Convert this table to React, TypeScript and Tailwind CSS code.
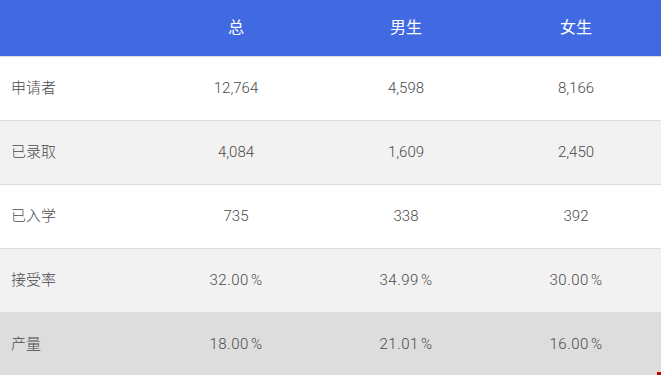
import React from "react";

const rows = [
  { label: "申请者", v: ["12,764", "4,598", "8,166"], bg: "bg-white" },
  { label: "已录取", v: ["4,084", "1,609", "2,450"], bg: "bg-[#f2f2f2]" },
  { label: "已入学", v: ["735", "338", "392"], bg: "bg-white" },
  { label: "接受率", v: ["32.00%", "34.99%", "30.00%"], bg: "bg-[#f2f2f2]" },
  { label: "产量", v: ["18.00%", "21.01%", "16.00%"], bg: "bg-[#dddddd]" },
];

function Val({ x }: { x: string }) {
  if (x.endsWith("%")) {
    return (
      <span className="tracking-[0.5px]">
        {x.slice(0, -1)}
        <span className="ml-[2px]">%</span>
      </span>
    );
  }
  return <span>{x}</span>;
}

export default function App() {
  return (
    <div
      className="relative w-[661px] h-[375px] overflow-hidden bg-white font-light text-[15px] text-[#4a4a4a]"
      style={{ fontFamily: 'Roboto, "Noto Sans CJK SC", sans-serif' }}
    >
      <div className="grid grid-cols-[151px_170px_170px_170px] h-[56px] bg-[#4169e1] text-white text-[16px] font-normal items-center">
        <div />
        <div className="text-center">总</div>
        <div className="text-center">男生</div>
        <div className="text-center">女生</div>
      </div>
      {rows.map((r) => (
        <div
          key={r.label}
          className={`grid grid-cols-[151px_170px_170px_170px] h-[64px] items-center border-t border-[#dcdcdc] ${r.bg}`}
        >
          <div className="pl-[11px]">{r.label}</div>
          {r.v.map((x, i) => (
            <div key={i} className="text-center">
              <Val x={x} />
            </div>
          ))}
        </div>
      ))}
      <div className="absolute right-0 bottom-0 w-[4px] h-[3px] bg-[#cc0000]" />
    </div>
  );
}
